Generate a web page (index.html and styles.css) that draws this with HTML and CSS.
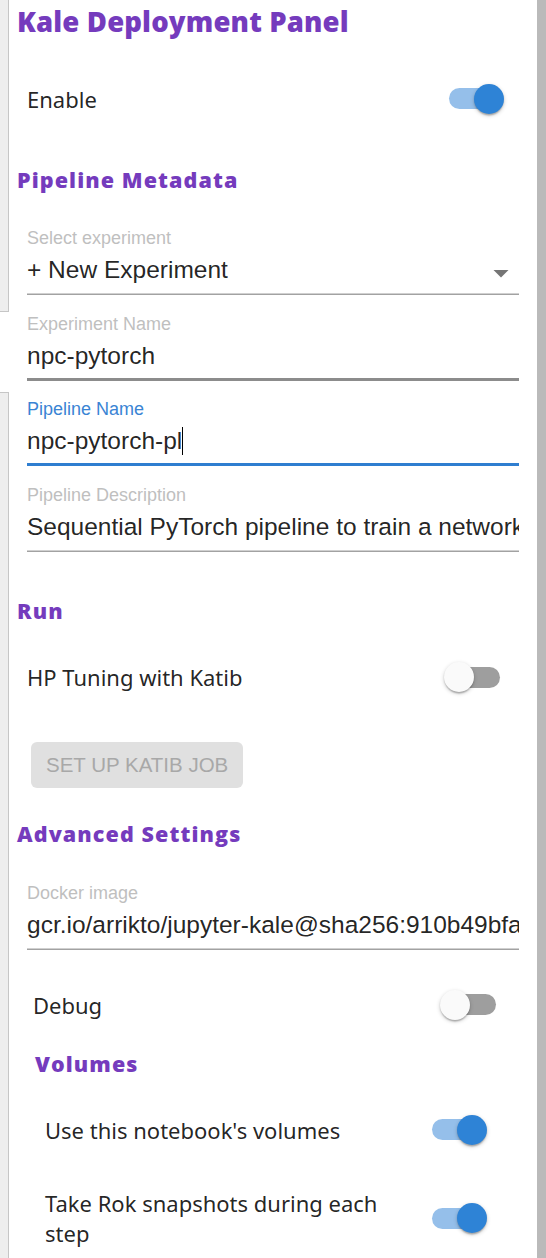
FILE: index.html
```html
<!DOCTYPE html>
<html lang="en">
<head>
<meta charset="utf-8">
<title>Kale Deployment Panel</title>
<link rel="stylesheet" href="styles.css">
</head>
<body>
<div class="page">
  <aside class="side">
    <div class="side-box side-box-top"></div>
    <div class="side-box side-box-bottom"></div>
  </aside>

  <main class="panel">
    <h1 class="title">Kale Deployment Panel</h1>

    <div class="toggle-row row-main row-enable">
      <span class="toggle-label">Enable</span>
      <span class="switch on"><span class="track"></span><span class="thumb"></span></span>
    </div>

    <h2 class="section section-meta">Pipeline Metadata</h2>

    <div class="fields fields-meta">
      <div class="field">
        <div class="field-label">Select experiment</div>
        <div class="field-input">
          <span class="field-value">+ New Experiment</span>
          <svg class="select-arrow" width="36" height="28" viewBox="0 0 36 28" aria-hidden="true"><path d="M10.5 14 L18 21.5 L25.5 14 Z"/></svg>
        </div>
      </div>
      <div class="field">
        <div class="field-label">Experiment Name</div>
        <div class="field-input hover"><span class="field-value">npc-pytorch</span></div>
      </div>
      <div class="field">
        <div class="field-label focused">Pipeline Name</div>
        <div class="field-input focused"><span class="field-value">npc-pytorch-pl</span><span class="caret"></span></div>
      </div>
      <div class="field">
        <div class="field-label">Pipeline Description</div>
        <div class="field-input"><span class="field-value">Sequential PyTorch pipeline to train a network</span></div>
      </div>
    </div>

    <h2 class="section section-run">Run</h2>

    <div class="toggle-row row-main row-katib">
      <span class="toggle-label">HP Tuning with Katib</span>
      <span class="switch"><span class="track"></span><span class="thumb"></span></span>
    </div>

    <button class="btn" type="button" disabled>Set up Katib Job</button>

    <h2 class="section section-adv">Advanced Settings</h2>

    <div class="fields fields-adv">
      <div class="field">
        <div class="field-label">Docker image</div>
        <div class="field-input"><span class="field-value">gcr.io/arrikto/jupyter-kale@sha256:910b49bfa</span></div>
      </div>
    </div>

    <div class="toggle-row row-debug">
      <span class="toggle-label">Debug</span>
      <span class="switch"><span class="track"></span><span class="thumb"></span></span>
    </div>

    <h3 class="section section-volumes">Volumes</h3>

    <div class="toggle-row row-volume row-use">
      <span class="toggle-label">Use this notebook's volumes</span>
      <span class="switch on"><span class="track"></span><span class="thumb"></span></span>
    </div>

    <div class="toggle-row row-volume row-rok">
      <span class="toggle-label">Take Rok snapshots during each step</span>
      <span class="switch on"><span class="track"></span><span class="thumb"></span></span>
    </div>
  </main>

  <div class="scrollbar"></div>
</div>
</body>
</html>
```

FILE: styles.css
```css
* { box-sizing: border-box; }

html, body {
  margin: 0;
  padding: 0;
  background: #ffffff;
}

body {
  width: 546px;
  height: 1258px;
  overflow: hidden;
  font-family: "Noto Sans", "Open Sans", sans-serif;
  color: rgba(0, 0, 0, 0.87);
}

.page {
  display: flex;
  height: 1258px;
}

/* left strip: edges of panels behind */
.side {
  width: 9px;
  flex: none;
  display: flex;
  flex-direction: column;
}

.side-box {
  background: #eeeeee;
  border-right: 1px solid #c6c6c6;
}

.side-box-top {
  height: 312px;
  border-bottom: 1px solid #c6c6c6;
}

.side-box-bottom {
  margin-top: 80px;
  flex: 1;
  border-top: 1px solid #c6c6c6;
}

.scrollbar {
  width: 9px;
  flex: none;
  background: #bababa;
}

.panel {
  flex: 1;
  min-width: 0;
  display: flex;
  flex-direction: column;
  padding: 0 18px 0 8px;
}

/* headings */
.title {
  margin: 0;
  font-family: "Open Sans", "Noto Sans", sans-serif;
  font-weight: 800;
  font-size: 27.5px;
  letter-spacing: 0.15px;
  line-height: 44px;
  color: #753bbd;
  white-space: nowrap;
}

.section {
  margin: 0;
  font-family: "Open Sans", "Noto Sans", sans-serif;
  font-weight: 800;
  font-size: 21.5px;
  letter-spacing: 1.1px;
  line-height: 32px;
  color: #753bbd;
}

.section-meta { margin-top: 36.5px; }
.section-run { margin-top: 43.5px; }
.section-adv { margin-top: 30px; }
.section-volumes { margin-top: 14px; padding-left: 18px; }

/* toggle rows */
.toggle-row {
  display: flex;
  align-items: center;
  justify-content: space-between;
  min-height: 58px;
  font-size: 22px;
  line-height: 30px;
}

.toggle-label {
  max-width: 350px;
}

.row-main { padding: 0 15px 0 10px; }
.row-debug { padding: 0 19px 0 16px; margin-top: 25.5px; }
.row-volume { padding: 0 32px 0 28px; }

.row-enable { margin-top: 25.5px; }
.row-katib { margin-top: 21px; }
.row-use { margin-top: 21px; }
.row-rok { margin-top: 29.5px; }

.switch {
  position: relative;
  flex: none;
  width: 60px;
  height: 30px;
}

.switch .track {
  position: absolute;
  left: 4.5px;
  top: 4.5px;
  width: 51px;
  height: 21px;
  border-radius: 10.5px;
  background: #9e9e9e;
}

.switch .thumb {
  position: absolute;
  left: 0;
  top: 0;
  width: 30px;
  height: 30px;
  border-radius: 50%;
  background: #fafafa;
  box-shadow: 0 1.5px 4.5px rgba(0, 0, 0, 0.2),
              0 1.5px 1.5px rgba(0, 0, 0, 0.14),
              0 3px 1.5px -1.5px rgba(0, 0, 0, 0.12);
}

.switch.on .track { background: #95bfea; }
.switch.on .thumb { left: 30px; background: #2e83d6; }

/* text fields */
.fields {
  display: flex;
  flex-direction: column;
  gap: 18.5px;
  padding-left: 10px;
}

.fields-meta { margin-top: 32px; }
.fields-adv { margin-top: 33px; }

.field {
  display: flex;
  flex-direction: column;
}

.field-label {
  font-family: "Liberation Sans", Arial, sans-serif;
  font-size: 18px;
  line-height: 20px;
  color: #bfbfbf;
  margin-bottom: 8px;
  white-space: nowrap;
}

.field-label.focused { color: #3a84d4; }

.field-input {
  display: flex;
  align-items: center;
  font-family: "Liberation Sans", Arial, sans-serif;
  font-size: 24.5px;
  line-height: 28px;
  padding-bottom: 11px;
  white-space: nowrap;
  overflow: hidden;
  color: rgba(0, 0, 0, 0.87);
  box-shadow: inset 0 -1.5px 0 #a2a2a2;
}

.field-input.hover { box-shadow: inset 0 -3px 0 #8c8c8c; }
.field-input.focused { box-shadow: inset 0 -3px 0 #2f7ed0; }

.field-value {
  flex: 1 1 auto;
  overflow: hidden;
}

.field-input.focused .field-value { flex: 0 0 auto; }

.caret {
  width: 1px;
  height: 28px;
  background: #000000;
  flex: none;
}

.select-arrow {
  flex: none;
  fill: #757575;
}

/* disabled button */
.btn {
  align-self: flex-start;
  margin: 36px 0 0 14px;
  height: 46px;
  padding: 0 15px;
  border: 0;
  border-radius: 6px;
  background: #e0e0e0;
  color: #a8a8a8;
  font-family: "Liberation Sans", Arial, sans-serif;
  font-size: 20.5px;
  text-transform: uppercase;
}
```
